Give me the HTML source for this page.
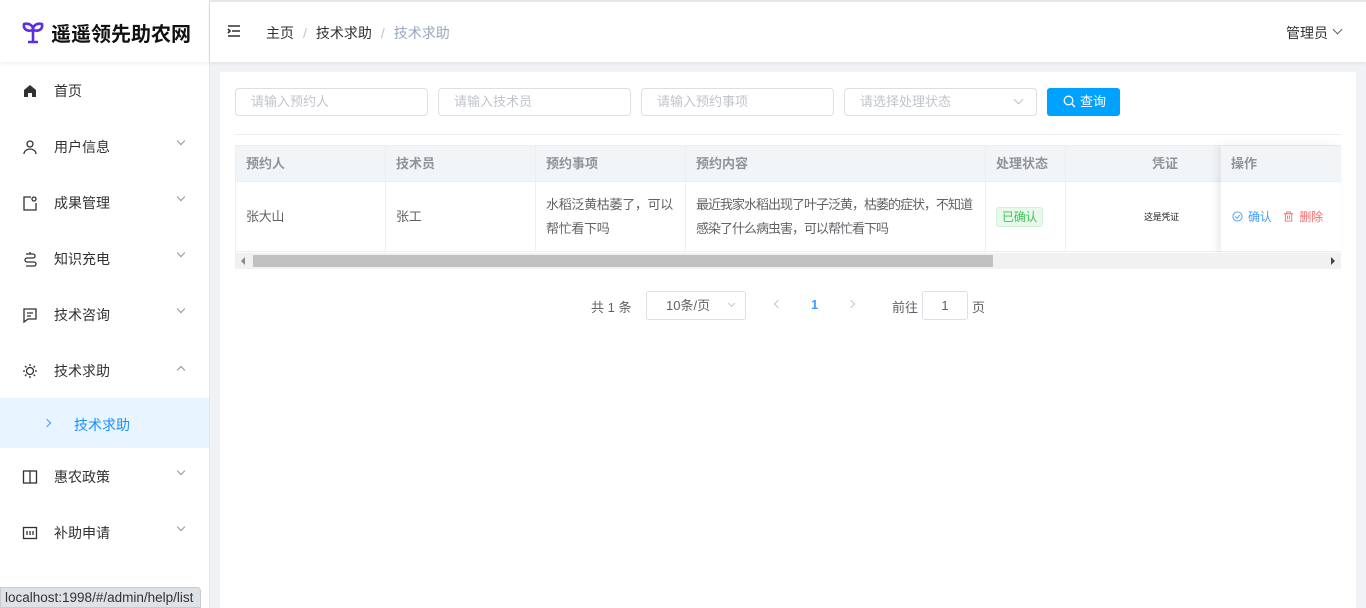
<!DOCTYPE html>
<html><head><meta charset="utf-8"><style>
*{box-sizing:border-box;margin:0;padding:0}
body{width:1366px;height:608px;overflow:hidden;background:#f0f2f5;font-family:"Liberation Sans","Noto Sans CJK SC",sans-serif;font-size:14px;color:#303133;position:relative}
.a{position:absolute}
.side{left:0;top:0;width:210px;height:608px;background:#fff;border-right:1px solid #e6e6e6}
.logo{left:0;top:2px;width:209px;height:60px;box-shadow:0 2px 4px rgba(0,0,0,.06);display:flex;align-items:center;padding-left:21px;font-size:20px;font-weight:bold;color:#111}
.mi{left:0;width:209px;height:56px;display:flex;align-items:center;padding-left:54px;font-size:14px;color:#303133}
.mi svg.ic{position:absolute;left:22px;top:20px}
.chev{position:absolute;left:178px;top:19px;width:6px;height:6px;border-right:1px solid #909399;border-bottom:1px solid #909399;transform:rotate(45deg)}
.top{left:210px;top:2px;width:1156px;height:60px;background:#fff;box-shadow:0 1px 4px rgba(0,21,41,.08)}
.card{left:220px;top:72px;width:1136px;height:536px;background:#fff}
.inp{top:88px;height:28px;border:1px solid #dcdfe6;border-radius:4px;font-size:13px;color:#c0c4cc;padding-left:15px;line-height:26px;background:#fff}
.th{top:146px;height:36px;background:#f2f5f8;border-right:1px solid #ebeef5;border-bottom:1px solid #ebeef5;font-size:13px;font-weight:bold;color:#909399;padding-left:10px;line-height:35px}
.td{top:182px;height:70px;border-right:1px solid #ebeef5;border-bottom:1px solid #ebeef5;font-size:13px;color:#606266;padding:0 6px 0 10px;display:flex;align-items:center;line-height:24px;background:#fff;letter-spacing:-0.3px;white-space:nowrap;overflow:hidden}
</style></head><body>
<div class="a" style="left:0;top:0;width:1366px;height:2px;background:#e8e8e8"></div>
<div class="a side"></div>
<div class="a logo"><svg width="24" height="24" viewBox="0 0 24 24" style="margin-right:6px"><path d="M12 22V10M12 10C12 5 8 3 3 4 2 9 6 12 12 10ZM12 10C12 5 16 3 21 4 22 9 18 12 12 10ZM7 22h10" stroke="#5b2ee6" stroke-width="2.6" fill="none" stroke-linejoin="round"/></svg>遥遥领先助农网</div>

<div class="a mi" style="top:63px"><svg class="ic" width="16" height="16" viewBox="0 0 16 16"><path d="M2 7L8 2l6 5v7h-4v-4H6v4H2z" fill="#303133"/></svg>首页</div>
<div class="a mi" style="top:119px"><svg class="ic" width="16" height="16" viewBox="0 0 16 16" fill="none" stroke="#303133" stroke-width="1.3"><circle cx="8" cy="5" r="3"/><path d="M2 15c0-3 3-5 6-5s6 2 6 5"/></svg>用户信息<i class="chev"></i></div>
<div class="a mi" style="top:175px"><svg class="ic" width="16" height="16" viewBox="0 0 16 16" fill="none" stroke="#303133" stroke-width="1.3"><path d="M9 2H2v13h12V8"/><circle cx="12" cy="4" r="2"/></svg>成果管理<i class="chev"></i></div>
<div class="a mi" style="top:231px"><svg class="ic" width="16" height="16" viewBox="0 0 16 16" fill="none" stroke="#303133" stroke-width="1.3"><path d="M4 3h7a2 2 0 010 4H5a2 2 0 000 4h7a2 2 0 010 4H4M8 1v2"/></svg>知识充电<i class="chev"></i></div>
<div class="a mi" style="top:287px"><svg class="ic" width="16" height="16" viewBox="0 0 16 16" fill="none" stroke="#303133" stroke-width="1.3"><path d="M2 2h12v10H6l-4 3z"/><path d="M5 6h6M5 9h4"/></svg>技术咨询<i class="chev"></i></div>
<div class="a mi" style="top:343px"><svg class="ic" width="16" height="16" viewBox="0 0 16 16" fill="none" stroke="#303133" stroke-width="1.3"><circle cx="8" cy="8" r="3.5"/><path d="M8 1v2M8 13v2M1 8h2M13 8h2M3 3l1.4 1.4M11.6 11.6L13 13M3 13l1.4-1.4M11.6 4.4L13 3"/></svg>技术求助<i class="chev" style="transform:rotate(225deg);top:24px"></i></div>
<div class="a" style="left:0;top:398px;width:209px;height:50px;background:#e8f4ff"></div>
<div class="a" style="left:44px;top:420px;width:6px;height:6px;border-right:1px solid #409eff;border-top:1px solid #409eff;transform:rotate(45deg)"></div>
<div class="a" style="left:74px;top:415px;font-size:14px;color:#1890ff">技术求助</div>
<div class="a mi" style="top:449px"><svg class="ic" width="16" height="16" viewBox="0 0 16 16" fill="none" stroke="#303133" stroke-width="1.3"><rect x="1.5" y="2" width="13" height="12"/><path d="M8 2v12"/></svg>惠农政策<i class="chev"></i></div>
<div class="a mi" style="top:505px"><svg class="ic" width="16" height="16" viewBox="0 0 16 16" fill="none" stroke="#303133" stroke-width="1.3"><rect x="1.5" y="2.5" width="13" height="11"/><path d="M5 6v4M8 6v4M11 6v4"/></svg>补助申请<i class="chev"></i></div>
<div class="a" style="left:0;top:587px;width:201px;height:21px;background:#dee1e6;border:1px solid #c8ccd2;border-radius:0 4px 0 0;font-size:13.5px;color:#333;padding-left:4px;line-height:20px;white-space:nowrap">localhost:1998/#/admin/help/list</div>

<div class="a top"></div>
<svg class="a" style="left:227px;top:25px" width="14" height="12" viewBox="0 0 14 12"><path d="M1 1h12M5 6h8M1 11h12M1 4l2 2-2 2" stroke="#303133" stroke-width="1.6" fill="none"/></svg>
<div class="a" style="left:266px;top:23px;font-size:14px;color:#303133">主页<span style="color:#c0c4cc;margin:0 9px">/</span>技术求助<span style="color:#c0c4cc;margin:0 9px">/</span><span style="color:#97a8be">技术求助</span></div>
<div class="a" style="left:1286px;top:23px;font-size:14px;color:#303133">管理员</div>
<div class="a" style="left:1334px;top:26px;width:7px;height:7px;border-right:1px solid #606266;border-bottom:1px solid #606266;transform:rotate(45deg)"></div>

<div class="a card"></div>
<div class="a inp" style="left:235px;width:193px">请输入预约人</div>
<div class="a inp" style="left:438px;width:193px">请输入技术员</div>
<div class="a inp" style="left:641px;width:193px">请输入预约事项</div>
<div class="a inp" style="left:844px;width:193px">请选择处理状态</div>
<div class="a" style="left:1015px;top:96px;width:7px;height:7px;border-right:1px solid #c0c4cc;border-bottom:1px solid #c0c4cc;transform:rotate(45deg)"></div>
<div class="a" style="left:1047px;top:88px;width:73px;height:28px;background:#00a2ff;border-radius:3px;color:#fff;font-size:13px;line-height:28px;padding-left:33px">查询</div>
<svg class="a" style="left:1063px;top:95px" width="13" height="13" viewBox="0 0 13 13"><circle cx="5.5" cy="5.5" r="4.3" stroke="#fff" stroke-width="1.3" fill="none"/><path d="M9 9l3 3" stroke="#fff" stroke-width="1.3"/></svg>
<div class="a" style="left:235px;top:134px;width:1106px;height:1px;background:#ebeef5"></div>

<div class="a" style="left:235px;top:145px;width:1106px;height:124px;border:1px solid #ebeef5;border-right:none"></div>
<div class="a th" style="left:236px;width:150px">预约人</div>
<div class="a th" style="left:386px;width:150px">技术员</div>
<div class="a th" style="left:536px;width:150px">预约事项</div>
<div class="a th" style="left:686px;width:300px">预约内容</div>
<div class="a th" style="left:986px;width:80px">处理状态</div>
<div class="a th" style="left:1066px;width:200px;padding-left:86px">凭证</div>
<div class="a td" style="left:236px;width:150px">张大山</div>
<div class="a td" style="left:386px;width:150px">张工</div>
<div class="a td" style="left:536px;width:150px"><div>水稻泛黄枯萎了，可以<br>帮忙看下吗</div></div>
<div class="a td" style="left:686px;width:300px;letter-spacing:-1px"><div>最近我家水稻出现了叶子泛黄，枯萎的症状，不知道<br>感染了什么病虫害，可以帮忙看下吗</div></div>
<div class="a td" style="left:986px;width:80px"><span style="border:1px solid #d4f2d7;background:#e8f8ea;color:#3cc556;font-size:12px;line-height:18px;padding:0 5px;border-radius:3px">已确认</span></div>
<div class="a td" style="left:1066px;width:200px;justify-content:flex-start;padding-left:78px;font-size:9px;color:#222">这是凭证</div>
<div class="a" style="left:1221px;top:146px;width:120px;height:106px;background:#fff;box-shadow:-4px 0 8px rgba(0,0,0,.08)"></div>
<div class="a th" style="left:1221px;width:120px;border-right:none">操作</div>
<div class="a td" style="left:1221px;width:120px;border-right:none;font-size:12px;padding-left:11px"><svg width="11" height="11" viewBox="0 0 12 12"><circle cx="6" cy="6" r="5" stroke="#409eff" fill="none"/><path d="M3.5 6l2 2 3-3.5" stroke="#409eff" fill="none"/></svg><span style="color:#409eff;margin-left:5px">确认</span><svg style="margin-left:12px" width="11" height="11" viewBox="0 0 12 12"><path d="M1 3h10M4 3V1h4v2M2.5 3v8h7V3M5 5v4M7 5v4" stroke="#f56c6c" fill="none"/></svg><span style="color:#f56c6c;margin-left:5px">删除</span></div>
<div class="a" style="left:236px;top:253px;width:1105px;height:16px;background:#f1f1f1"></div>
<div class="a" style="left:253px;top:255px;width:740px;height:12px;background:#c1c1c1"></div>
<div class="a" style="left:241px;top:257px;width:0;height:0;border:4px solid transparent;border-right-color:#888;border-left:none"></div>
<div class="a" style="left:1331px;top:257px;width:0;height:0;border:4px solid transparent;border-left-color:#444;border-right:none"></div>

<div class="a" style="left:591px;top:297px;font-size:13px;color:#606266">共 1 条</div>
<div class="a" style="left:646px;top:291px;width:100px;height:29px;border:1px solid #dcdfe6;border-radius:3px;font-size:13px;color:#606266;line-height:27px;padding-left:19px">10条/页</div>
<div class="a" style="left:729px;top:301px;width:5px;height:5px;border-right:1px solid #c0c4cc;border-bottom:1px solid #c0c4cc;transform:rotate(45deg)"></div>
<div class="a" style="left:775px;top:301px;width:6px;height:6px;border-left:1px solid #c0c4cc;border-bottom:1px solid #c0c4cc;transform:rotate(45deg)"></div>
<div class="a" style="left:811px;top:297px;font-size:13px;font-weight:bold;color:#409eff">1</div>
<div class="a" style="left:848px;top:301px;width:6px;height:6px;border-right:1px solid #c0c4cc;border-top:1px solid #c0c4cc;transform:rotate(45deg)"></div>
<div class="a" style="left:892px;top:297px;font-size:13px;color:#606266">前往</div>
<div class="a" style="left:922px;top:291px;width:46px;height:29px;border:1px solid #dcdfe6;border-radius:3px;font-size:13px;color:#606266;line-height:27px;text-align:center">1</div>
<div class="a" style="left:972px;top:297px;font-size:13px;color:#606266">页</div>
</body></html>
